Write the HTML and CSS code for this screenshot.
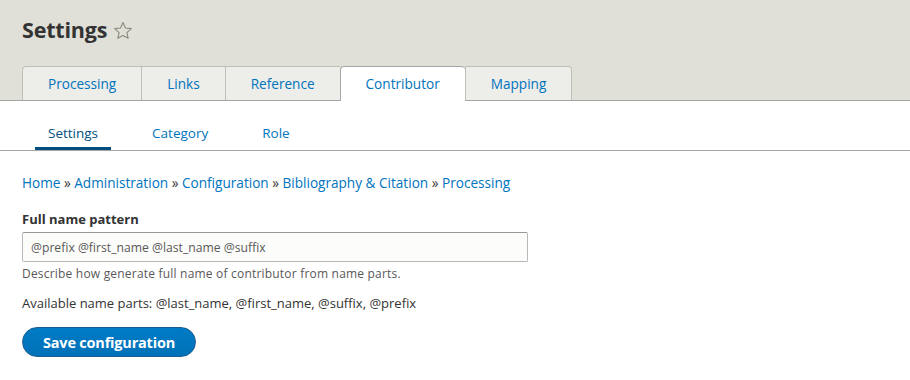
FILE: index.html
```html
<!DOCTYPE html>
<html lang="en">
<head>
    <meta charset="utf-8">
    <link rel="stylesheet" href="styles.css">
    <title>Settings</title>
</head>
<body>
<header class="pageHeader">
    <h1 class="pageTitle">Settings
        <svg class="star" width="20" height="20" viewBox="0 0 20 20">
            <path d="M10 1.6l2.45 5.4 5.85.6-4.4 3.95 1.25 5.8L10 14.4l-5.15 2.95 1.25-5.8L1.7 7.6l5.85-.6z"
                  fill="none" stroke="#8a8a7e" stroke-width="1.1" stroke-linejoin="round"/>
        </svg>
    </h1>
    <nav class="tabsPrimary">
        <a href="#">Processing</a>
        <a href="#">Links</a>
        <a href="#">Reference</a>
        <a href="#" class="active">Contributor</a>
        <a href="#">Mapping</a>
    </nav>
</header>
<nav class="tabsSecondary">
    <a href="#" class="active">Settings</a>
    <a href="#">Category</a>
    <a href="#">Role</a>
</nav>
<main>
    <div class="breadcrumb">
        <a href="#">Home</a> » <a href="#">Administration</a> » <a href="#">Configuration</a> »
        <a href="#">Bibliography &amp; Citation</a> » <a href="#">Processing</a>
    </div>
    <form class="configForm">
        <label for="pattern">Full name pattern</label>
        <input id="pattern" type="text" value="@prefix @first_name @last_name @suffix">
        <div class="description">Describe how generate full name of contributor from name parts.</div>
        <p class="parts">Available name parts: @last_name, @first_name, @suffix, @prefix</p>
        <button type="button" class="btnPrimary">Save configuration</button>
    </form>
</main>
</body>
</html>
```

FILE: styles.css
```css
/* @formatter:off */
html, body { margin: 0; padding: 0; background: #fff; font-family: "Open Sans", sans-serif; font-size: 13px; color: #333; }
a { color: #0074bd; text-decoration: none; }

.pageHeader { background: #e0e0d8; padding: 14px 0 0 22px; border-bottom: 1px solid #a6a6a6; }
.pageTitle { display: flex; align-items: center; gap: 6px; margin: 0 0 20px; font-size: 21.5px; font-weight: 700; color: #333; line-height: 32px; letter-spacing: -0.2px; }
.star { margin-top: 1px; }

.tabsPrimary { display: flex; font-size: 13.6px; }
.tabsPrimary a { display: block; padding: 0 25px; height: 33px; line-height: 33px; background: #ededea; border: 1px solid #bfbfba; border-bottom: 0; border-right: 0; color: #0074bd; text-align: center; }
.tabsPrimary a:first-child { border-radius: 4px 0 0 0; }
.tabsPrimary a:last-child { border-right: 1px solid #bfbfba; border-radius: 0 4px 0 0; }
.tabsPrimary a.active { background: #fff; border-color: #a6a6a6; border-radius: 4px 4px 0 0; height: 34px; margin-bottom: -1px; position: relative; }
.tabsPrimary a.active + a { border-radius: 0 4px 0 0; }

.tabsSecondary { display: flex; padding: 0 0 0 35px; border-bottom: 1px solid #a6a6a6; height: 49px; align-items: flex-end; font-size: 13.5px; }
.tabsSecondary a { display: block; padding: 0 13px; height: 30px; line-height: 26px; margin-right: 28px; }
.tabsSecondary a.active { color: #004f80; border-bottom: 3px solid #004f80; height: 27px; }

main { padding: 22px 22px; }
.breadcrumb { font-size: 13.6px; line-height: 20px; color: #333; margin-bottom: 16px; }

.configForm label { display: block; font-weight: 700; line-height: 20px; margin-bottom: 3px; }
.configForm input { box-sizing: border-box; width: 506px; height: 30px; padding: 0 8px; border: 1px solid #b8b8b8; border-top-color: #999; border-radius: 2px; background: #fcfcfa; font-family: inherit; font-size: 12.2px; color: #595959; }
.description { font-size: 12px; color: #595959; line-height: 18px; margin-top: 3px; letter-spacing: 0.2px; }
.parts { margin: 10px 0 14px; line-height: 20px; }
.btnPrimary { width: 174px; height: 30px; border: 1px solid #1e5c90; border-radius: 20px; background: linear-gradient(#007bc6, #0071b8); color: #fff; font-family: inherit; font-size: 14.5px; font-weight: 700; padding: 0; letter-spacing: -0.2px; }
/* @formatter:on */
```
